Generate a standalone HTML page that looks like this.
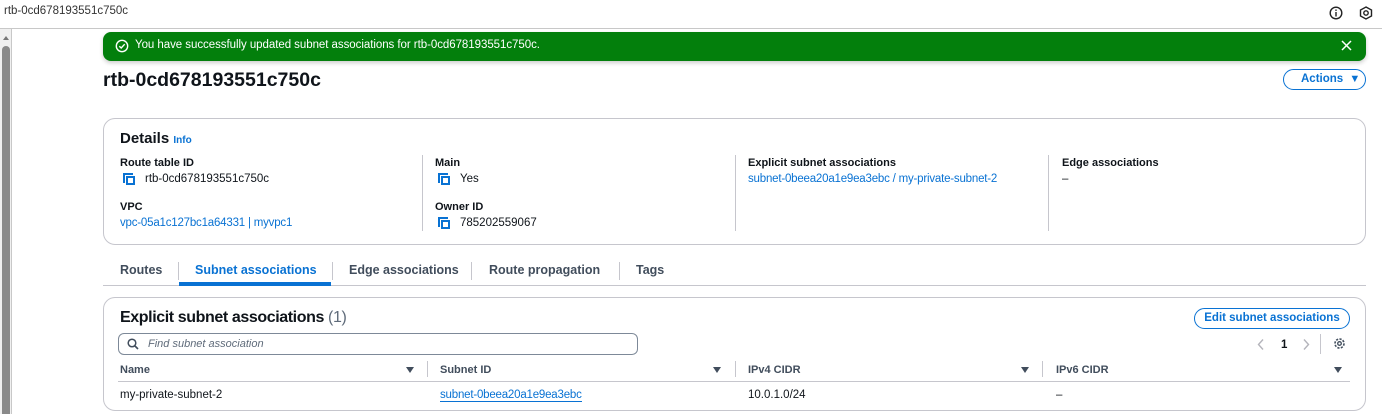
<!DOCTYPE html>
<html><head><meta charset="utf-8"><style>
*{box-sizing:border-box;margin:0;padding:0}
body{width:1382px;height:414px;overflow:hidden;background:#fff;font-family:"Liberation Sans",sans-serif;color:#0f141a;position:relative;font-size:11.5px}
.a{position:absolute;white-space:nowrap}
.lnk{color:#0972d3}
.b{font-weight:bold}
.copy{position:absolute;width:12px;height:12px}
.copy:before{content:"";position:absolute;left:0;top:0;width:8px;height:8px;border-left:2px solid #0972d3;border-top:2px solid #0972d3}
.copy:after{content:"";position:absolute;left:3px;top:3px;width:9px;height:9px;border:2px solid #0972d3;box-sizing:border-box}
.vl{position:absolute;width:1px;background:#c6c6cd}
.tri{position:absolute;width:0;height:0;border-left:4px solid transparent;border-right:4px solid transparent;border-top:6px solid #414d5c}
</style></head><body>
<div class="a" style="left:4px;top:5px;font-size:11.5px;color:#333">rtb-0cd678193551c750c</div>
<svg class="a" style="left:1329px;top:6px" width="14" height="14" viewBox="0 0 14 14"><circle cx="7" cy="7" r="5.8" fill="none" stroke="#222" stroke-width="1.4"/><rect x="6.3" y="6" width="1.4" height="4.5" fill="#222"/><rect x="6.3" y="3.5" width="1.4" height="1.4" fill="#222"/></svg>
<svg class="a" style="left:1359px;top:6px" width="14" height="14" viewBox="0 0 14 14"><path d="M7 1L12.5 4V10L7 13L1.5 10V4Z" fill="none" stroke="#222" stroke-width="1.4"/><circle cx="7" cy="7" r="2.2" fill="none" stroke="#222" stroke-width="1.4"/></svg>
<div class="a" style="left:0;top:28px;width:1382px;height:1px;background:#c8c8c8"></div>
<div class="a" style="left:0;top:29px;width:11px;height:385px;background:#f0f0f0"></div>
<div class="a" style="left:11px;top:29px;width:1px;height:385px;background:#c8c8c8"></div>
<div class="a" style="left:3px;top:36px;width:0;height:0;border-left:3px solid transparent;border-right:3px solid transparent;border-bottom:4px solid #777"></div>
<div class="a" style="left:2px;top:46px;width:8px;height:368px;background:#8a8a8a;border-radius:4px 4px 0 0"></div>

<div class="a" style="left:103px;top:32px;width:1263px;height:29px;background:#037f0c;border-radius:8px;box-shadow:0 2px 4px rgba(0,0,0,.2)"></div>
<svg class="a" style="left:115px;top:39px" width="14" height="14" viewBox="0 0 14 14"><circle cx="7" cy="7" r="5.7" fill="none" stroke="#fff" stroke-width="1.4"/><path d="M4.3 7.2L6.2 9L9.7 5.2" fill="none" stroke="#fff" stroke-width="1.4"/></svg>
<div class="a" style="left:135px;top:39px;color:#fff;font-size:11.5px;letter-spacing:-0.05px">You have successfully updated subnet associations for rtb-0cd678193551c750c.</div>
<svg class="a" style="left:1341px;top:40px" width="11" height="11" viewBox="0 0 11 11"><path d="M1 1L10 10M10 1L1 10" stroke="#fff" stroke-width="1.5"/></svg>

<div class="a b" style="left:103px;top:69px;font-size:19.5px">rtb-0cd678193551c750c</div>
<div class="a b lnk" style="left:1283px;top:69px;width:83px;height:21px;border:1.5px solid #0972d3;border-radius:12px;font-size:11.5px;padding:3px 0 0 17px">Actions <span style="font-size:11px;margin-left:3px">▼</span></div>

<div class="a" style="left:103px;top:118px;width:1263px;height:127px;border:1px solid #c6c6cd;border-radius:12px"></div>
<div class="a b" style="left:120px;top:130px;font-size:15px">Details <span class="lnk" style="font-size:10px">Info</span></div>
<div class="vl" style="left:422px;top:155px;height:76px"></div>
<div class="vl" style="left:735px;top:155px;height:76px"></div>
<div class="vl" style="left:1048px;top:155px;height:76px"></div>
<div class="a b" style="left:120px;top:157px;font-size:11px">Route table ID</div>
<div class="copy" style="left:123px;top:173px"></div>
<div class="a" style="left:145px;top:173px">rtb-0cd678193551c750c</div>
<div class="a b" style="left:120px;top:201px;font-size:11px">VPC</div>
<div class="a lnk" style="left:120px;top:217px;letter-spacing:-0.2px">vpc-05a1c127bc1a64331 | myvpc1</div>
<div class="a b" style="left:435px;top:157px;font-size:11px">Main</div>
<div class="copy" style="left:438px;top:173px"></div>
<div class="a" style="left:460px;top:173px">Yes</div>
<div class="a b" style="left:435px;top:201px;font-size:11px">Owner ID</div>
<div class="copy" style="left:438px;top:217px"></div>
<div class="a" style="left:460px;top:217px">785202559067</div>
<div class="a b" style="left:748px;top:157px;font-size:11px">Explicit subnet associations</div>
<div class="a lnk" style="left:748px;top:173px;letter-spacing:-0.2px">subnet-0beea20a1e9ea3ebc / my-private-subnet-2</div>
<div class="a b" style="left:1062px;top:157px;font-size:11px">Edge associations</div>
<div class="a" style="left:1062px;top:173px">–</div>

<div class="a b" style="left:120px;top:263px;font-size:12.5px;color:#414d5c">Routes</div>
<div class="vl" style="left:178px;top:262px;height:18px"></div>
<div class="a b lnk" style="left:195px;top:263px;font-size:12.5px">Subnet associations</div>
<div class="vl" style="left:332px;top:262px;height:18px"></div>
<div class="a b" style="left:349px;top:263px;font-size:12.5px;color:#414d5c">Edge associations</div>
<div class="vl" style="left:471px;top:262px;height:18px"></div>
<div class="a b" style="left:489px;top:263px;font-size:12.5px;color:#414d5c">Route propagation</div>
<div class="vl" style="left:619px;top:262px;height:18px"></div>
<div class="a b" style="left:636px;top:263px;font-size:12.5px;color:#414d5c">Tags</div>
<div class="a" style="left:103px;top:285px;width:1263px;height:1px;background:#c6c6cd"></div>
<div class="a" style="left:179px;top:282px;width:152px;height:4px;background:#0972d3"></div>

<div class="a" style="left:103px;top:297px;width:1263px;height:114px;border:1px solid #c6c6cd;border-radius:12px"></div>
<div class="a b" style="left:120px;top:309px;font-size:16px;letter-spacing:-0.4px">Explicit subnet associations <span style="font-weight:normal;color:#5f6b7a">(1)</span></div>
<div class="a b lnk" style="left:1194px;top:308px;width:156px;height:21px;border:1.5px solid #0972d3;border-radius:12px;font-size:11.5px;text-align:center;padding-top:3px">Edit subnet associations</div>
<div class="a" style="left:118px;top:333px;width:520px;height:22px;border:1px solid #7d8998;border-radius:6px"></div>
<svg class="a" style="left:127px;top:338px" width="12" height="12" viewBox="0 0 12 12"><circle cx="5" cy="5" r="3.8" fill="none" stroke="#414d5c" stroke-width="1.5"/><path d="M8 8L11 11" stroke="#414d5c" stroke-width="1.6"/></svg>
<div class="a" style="left:148px;top:338px;font-style:italic;color:#5f6b7a;font-size:11px">Find subnet association</div>
<svg class="a" style="left:1257px;top:338px" width="8" height="13" viewBox="0 0 8 13"><path d="M6 1.5L1.5 6.5L6 11.5" fill="none" stroke="#b4b4bb" stroke-width="1.4"/></svg>
<div class="a b" style="left:1281px;top:339px">1</div>
<svg class="a" style="left:1302px;top:338px" width="8" height="13" viewBox="0 0 8 13"><path d="M2 1.5L6.5 6.5L2 11.5" fill="none" stroke="#b4b4bb" stroke-width="1.4"/></svg>
<div class="vl" style="left:1320px;top:334px;height:20px"></div>
<svg class="a" style="left:1333px;top:337px" width="13" height="13" viewBox="0 0 13 13"><circle cx="6.5" cy="6.5" r="4.5" fill="none" stroke="#414d5c" stroke-width="1.6" stroke-dasharray="2.2 1.3"/><circle cx="6.5" cy="6.5" r="1.8" fill="none" stroke="#414d5c" stroke-width="1.3"/></svg>

<div class="a b" style="left:120px;top:364px;font-size:11px;color:#414d5c">Name</div>
<div class="tri" style="left:406px;top:367px"></div>
<div class="vl" style="left:427px;top:361px;height:16px"></div>
<div class="a b" style="left:440px;top:364px;font-size:11px;color:#414d5c">Subnet ID</div>
<div class="tri" style="left:713px;top:367px"></div>
<div class="vl" style="left:735px;top:361px;height:16px"></div>
<div class="a b" style="left:748px;top:364px;font-size:11px;color:#414d5c">IPv4 CIDR</div>
<div class="tri" style="left:1021px;top:367px"></div>
<div class="vl" style="left:1042px;top:361px;height:16px"></div>
<div class="a b" style="left:1056px;top:364px;font-size:11px;color:#414d5c">IPv6 CIDR</div>
<div class="tri" style="left:1334px;top:367px"></div>
<div class="a" style="left:118px;top:381px;width:1232px;height:1px;background:#c6c6cd"></div>
<div class="a" style="left:120px;top:389px">my-private-subnet-2</div>
<div class="a lnk" style="left:440px;top:389px;border-bottom:1px solid #0972d3;letter-spacing:-0.2px">subnet-0beea20a1e9ea3ebc</div>
<div class="a" style="left:748px;top:389px">10.0.1.0/24</div>
<div class="a" style="left:1056px;top:389px">–</div>
</body></html>
